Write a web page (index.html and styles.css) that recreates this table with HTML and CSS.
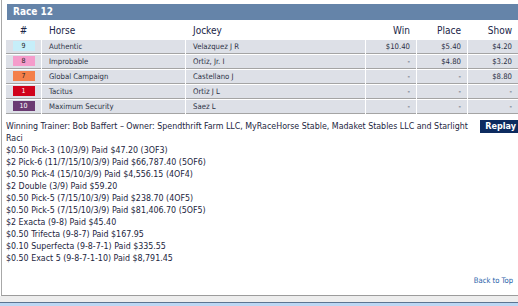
FILE: index.html
```html
<!DOCTYPE html>
<html>
<head>
<meta charset="utf-8">
<link rel="stylesheet" href="styles.css">
</head>
<body>
<div class="frame">
  <div class="panel">
    <div class="race-title">Race 12</div>
    <table class="results">
      <thead>
        <tr>
          <th class="c-num">#</th>
          <th class="c-horse">Horse</th>
          <th class="c-jockey">Jockey</th>
          <th class="c-money">Win</th>
          <th class="c-money">Place</th>
          <th class="c-money">Show</th>
        </tr>
      </thead>
      <tbody>
        <tr>
          <td class="c-num"><span class="pp pp-9">9</span></td>
          <td>Authentic</td>
          <td>Velazquez J R</td>
          <td class="c-money">$10.40</td>
          <td class="c-money">$5.40</td>
          <td class="c-money">$4.20</td>
        </tr>
        <tr>
          <td class="c-num"><span class="pp pp-8">8</span></td>
          <td>Improbable</td>
          <td>Ortiz, Jr. I</td>
          <td class="c-money">-</td>
          <td class="c-money">$4.80</td>
          <td class="c-money">$3.20</td>
        </tr>
        <tr>
          <td class="c-num"><span class="pp pp-7">7</span></td>
          <td>Global Campaign</td>
          <td>Castellano J</td>
          <td class="c-money">-</td>
          <td class="c-money">-</td>
          <td class="c-money">$8.80</td>
        </tr>
        <tr>
          <td class="c-num"><span class="pp pp-1">1</span></td>
          <td>Tacitus</td>
          <td>Ortiz J L</td>
          <td class="c-money">-</td>
          <td class="c-money">-</td>
          <td class="c-money">-</td>
        </tr>
        <tr>
          <td class="c-num"><span class="pp pp-10">10</span></td>
          <td>Maximum Security</td>
          <td>Saez L</td>
          <td class="c-money">-</td>
          <td class="c-money">-</td>
          <td class="c-money">-</td>
        </tr>
      </tbody>
    </table>
    <div class="notes">
      <a class="replay" href="#">Replay</a>
      <p class="trainer">Winning Trainer: Bob Baffert – Owner: Spendthrift Farm LLC, MyRaceHorse Stable, Madaket Stables LLC and Starlight Raci</p>
      <ul class="payouts">
        <li>$0.50 Pick-3 (10/3/9) Paid $47.20 (3OF3)</li>
        <li>$2 Pick-6 (11/7/15/10/3/9) Paid $66,787.40 (5OF6)</li>
        <li>$0.50 Pick-4 (15/10/3/9) Paid $4,556.15 (4OF4)</li>
        <li>$2 Double (3/9) Paid $59.20</li>
        <li>$0.50 Pick-5 (7/15/10/3/9) Paid $238.70 (4OF5)</li>
        <li>$0.50 Pick-5 (7/15/10/3/9) Paid $81,406.70 (5OF5)</li>
        <li>$2 Exacta (9-8) Paid $45.40</li>
        <li>$0.50 Trifecta (9-8-7) Paid $167.95</li>
        <li>$0.10 Superfecta (9-8-7-1) Paid $335.55</li>
        <li>$0.50 Exact 5 (9-8-7-1-10) Paid $8,791.45</li>
      </ul>
    </div>
    <div class="back"><a href="#">Back to Top</a></div>
  </div>
</div>
<div class="strip"></div>
</body>
</html>
```
FILE: styles.css
```css
html, body {
  margin: 0;
  padding: 0;
  width: 518px;
  height: 306px;
  overflow: hidden;
  background: #ffffff;
  font-family: "DejaVu Sans Condensed", "Liberation Sans", sans-serif;
  color: #1c2540;
}

.frame {
  margin-left: 1px;
  width: 540px;
  height: 295px;
  border-left: 1px solid #a8a8a8;
  border-bottom: 1px solid #9c9c9c;
  box-sizing: content-box;
  overflow: hidden;
}

.panel {
  display: flex;
  flex-direction: column;
  height: 291px;
  width: 513px;
  padding: 4px 0 0 4px;
  box-sizing: content-box;
}

.race-title {
  margin-left: 1px;
  margin-right: -10px;
  height: 16px;
  line-height: 16px;
  background: #6584a9;
  color: #ffffff;
  font-weight: bold;
  font-size: 10px;
  padding-left: 6px;
}

.results {
  margin-left: -1px;
  width: 514px;
  border-collapse: separate;
  border-spacing: 1px;
  table-layout: fixed;
  font-size: 7.7px;
}

.results th {
  height: 18px;
  padding: 0 0 0 7px;
  font-size: 10px;
  font-weight: normal;
  color: #1a2547;
  text-align: left;
  background: #ffffff;
}

.results td {
  height: 13px;
  line-height: 13px;
  padding: 0 0 0 7px;
  background: #dde0e7;
  border-bottom: 1px solid #a4a4a4;
  color: #2b3145;
  white-space: nowrap;
}

.results .c-num { width: 35px; padding: 0; text-align: center; }
.results .c-horse { width: 136px; }
.results .c-jockey { width: 172px; }
.results th.c-money, .results td.c-money {
  width: 50px;
  padding: 0 6px 0 0;
  text-align: right;
  box-sizing: border-box;
}

.pp {
  display: inline-block;
  width: 22px;
  height: 10px;
  line-height: 10px;
  font-size: 7px;
  vertical-align: middle;
  margin-top: -2px;
  color: #222;
}
.pp-9 { background: #c6eef9; }
.pp-8 { background: #f59ccb; }
.pp-7 { background: #f47f4a; }
.pp-1 { background: #d0021b; color: #ffffff; }
.pp-10 { background: #6a3a72; color: #ffffff; }

.notes {
  margin-top: 5px;
  font-size: 8.8px;
  line-height: 12px;
  color: #1c2540;
}

.replay {
  float: right;
  margin-right: -3px;
  height: 13px;
  line-height: 13px;
  padding: 0 6px 0 5px;
  background: #0d2b5f;
  color: #ffffff;
  font-weight: bold;
  font-size: 9px;
  text-decoration: none;
}

.trainer {
  margin: 0;
}

.payouts {
  list-style: none;
  margin: 0;
  padding: 0;
}

.back {
  margin-top: auto;
  padding: 0 6px 8px 0;
  text-align: right;
  font-size: 7.6px;
  line-height: 12px;
}

.back a {
  color: #1d5ea8;
  text-decoration: none;
}

.strip {
  height: 6px;
  background: #ededed;
  border-bottom: 1px solid #5b7491;
  box-shadow: 0 4px 0 #bcd7f3;
}
```
